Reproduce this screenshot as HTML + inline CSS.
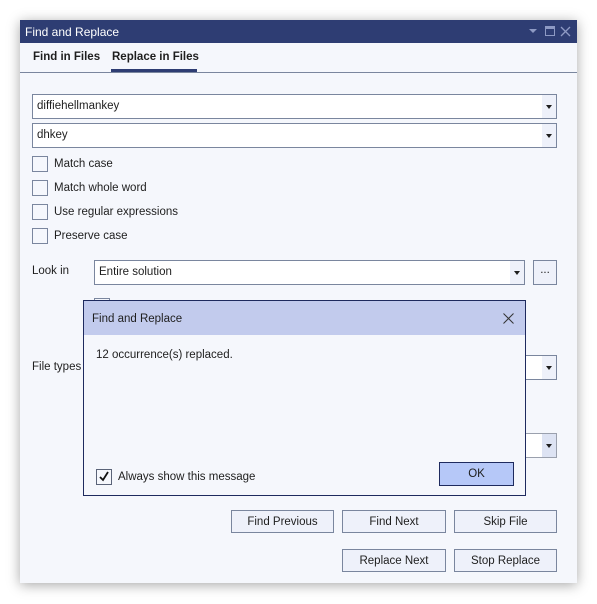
<!DOCTYPE html>
<html><head><style>
*{box-sizing:border-box;margin:0;padding:0}
body{width:597px;height:604px;background:#fff;font-family:"Segoe UI","Liberation Sans",sans-serif;font-size:11.5px;color:#1e1e1e;position:relative;overflow:hidden}
.win{position:absolute;left:20px;top:20px;width:557px;height:563px;background:#f5f7fc;box-shadow:0 2px 12px rgba(0,0,0,.35)}
.a{position:absolute}
.t{margin-top:1px}
.tb{left:0;top:0;width:557px;height:23px;background:#2e3d73;color:#fff;font-size:12px;padding:5px 0 0 5px}
.inp{background:#fff;border:1px solid #7a869e;height:25px;padding:5px 0 0 4px}
.dd{position:absolute;right:0;top:0;width:14px;height:23px;background:#eef1fa}
.dd:after{content:"";position:absolute;left:4px;top:10px;border-left:3px solid transparent;border-right:3px solid transparent;border-top:4px solid #1e1e1e}
.cb{width:16px;height:16px;border:1px solid #7a869e;background:#f5f7fc}
.btn{border:1px solid #7a869e;background:#eef1fa;height:23px;text-align:center;padding-top:5px}
</style></head><body>
<div class="win">
<div class="a tb">Find and Replace
<span style="position:absolute;left:509px;top:9px;border-left:4px solid transparent;border-right:4px solid transparent;border-top:4px solid #8e9ac4"></span>
<span style="position:absolute;left:525px;top:6px;width:10px;height:10px;border:1px solid #8e9ac4;border-top-width:3px"></span>
<svg style="position:absolute;left:540px;top:6px" width="11" height="11"><path d="M1 1L10 10M10 1L1 10" stroke="#8e9ac4" stroke-width="1.3"/></svg>
</div>
<div class="a" style="left:13px;top:31px;font-weight:bold">Find in Files</div>
<div class="a" style="left:92px;top:31px;font-weight:bold">Replace in Files</div>
<div class="a" style="left:91px;top:49px;width:86px;height:3px;background:#2e3d73"></div>
<div class="a" style="left:0;top:52px;width:557px;height:1px;background:#7a869e"></div>
<div class="a inp" style="left:12px;top:74px;width:525px">diffiehellmankey<div class="dd"></div></div>
<div class="a inp" style="left:12px;top:103px;width:525px">dhkey<div class="dd"></div></div>
<div class="a cb" style="left:12px;top:136px"></div><div class="a" style="left:34px;top:138px">Match case</div>
<div class="a cb" style="left:12px;top:160px"></div><div class="a" style="left:34px;top:162px">Match whole word</div>
<div class="a cb" style="left:12px;top:184px"></div><div class="a" style="left:34px;top:186px">Use regular expressions</div>
<div class="a cb" style="left:12px;top:208px"></div><div class="a" style="left:34px;top:210px">Preserve case</div>
<div class="a" style="left:12px;top:245px">Look in</div>
<div class="a inp" style="left:74px;top:240px;width:431px">Entire solution<div class="dd"></div></div>
<div class="a btn" style="left:513px;top:240px;width:24px;height:25px;padding-top:3px">...</div>
<div class="a cb" style="left:74px;top:278px"></div>
<div class="a" style="left:12px;top:341px">File types</div>
<div class="a inp" style="left:480px;top:335px;width:57px"><div class="dd"></div></div>
<div class="a inp" style="left:480px;top:413px;width:57px;border-color:#9aa0ad"><div class="dd" style="background:#dde3f3"></div></div>
<div class="a btn" style="left:211px;top:490px;width:103px">Find Previous</div>
<div class="a btn" style="left:322px;top:490px;width:104px">Find Next</div>
<div class="a btn" style="left:434px;top:490px;width:103px">Skip File</div>
<div class="a btn" style="left:322px;top:529px;width:104px">Replace Next</div>
<div class="a btn" style="left:434px;top:529px;width:103px">Stop Replace</div>
</div>
<div class="a" style="left:83px;top:300px;width:443px;height:196px;background:#f5f7fc;border:1px solid #1e2a5e">
<div class="a" style="left:0;top:0;width:441px;height:34px;background:#c2cbed;padding:12px 0 0 8px">Find and Replace
<svg style="position:absolute;left:419px;top:12px" width="11" height="11"><path d="M0.5 0.5L10.5 10.5M10.5 0.5L0.5 10.5" stroke="#333" stroke-width="1"/></svg></div>
<div class="a" style="left:12px;top:48px">12 occurrence(s) replaced.</div>
<div class="a cb" style="left:12px;top:168px;border-color:#5a6378"><svg width="14" height="14" style="position:absolute;left:0;top:0"><path d="M3 7L6 10L11 2" stroke="#111" stroke-width="1.8" fill="none"/></svg></div>
<div class="a" style="left:34px;top:170px">Always show this message</div>
<div class="a" style="left:355px;top:161px;width:75px;height:24px;background:#b6c8f8;border:1px solid #1e2a5e;text-align:center;padding-top:5px">OK</div>
</div>
</body></html>
